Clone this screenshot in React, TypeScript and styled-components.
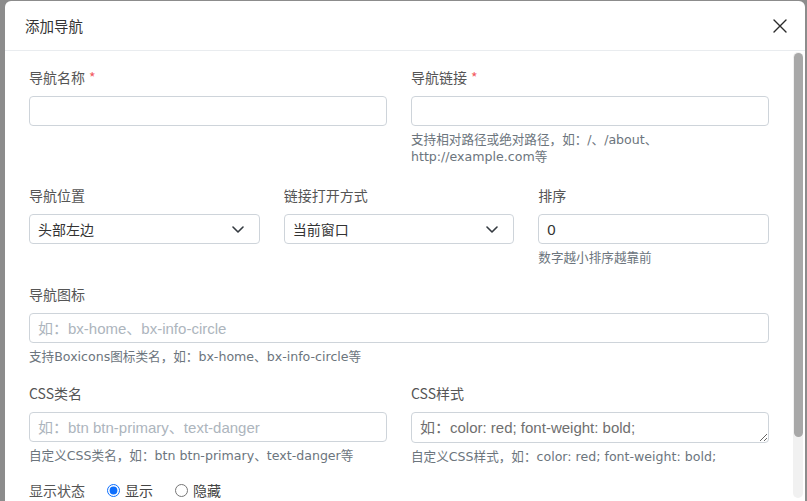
import React from 'react';
import styled, { createGlobalStyle } from 'styled-components';

const GlobalStyle = createGlobalStyle`
  html, body {
    margin: 0;
    padding: 0;
    background: #8c8c8c;
    overflow: hidden;
    font-family: "Noto Sans", "Noto Sans CJK SC", sans-serif;
  }
  * {
    box-sizing: border-box;
  }
`;

const Backdrop = styled.div`
  height: 501px;
  padding: 1px 2px 0 5px;
  display: flex;
`;

const Modal = styled.div`
  width: 800px;
  height: 500px;
  background: #fff;
  border-radius: 6px 6px 0 0;
  display: flex;
  flex-direction: column;
  overflow: hidden;
`;

const Header = styled.div`
  height: 50px;
  flex-shrink: 0;
  display: flex;
  align-items: center;
  justify-content: space-between;
  padding: 0 18px 0 20px;
  border-bottom: 1px solid #e9ecef;
`;

const Title = styled.h5`
  margin: 0;
  font-size: 14.5px;
  font-weight: 400;
  color: #333;
  font-family: "Noto Sans CJK SC", sans-serif;
`;

const CloseButton = styled.button`
  border: 0;
  background: none;
  padding: 0;
  display: flex;
  cursor: pointer;
`;

const BodyFrame = styled.div`
  flex: 1;
  min-height: 0;
  display: flex;
  padding: 1px 2px 3px 0;
`;

const Content = styled.div`
  flex: 1;
  overflow: hidden;
  padding: 15px 24px 0 24px;
`;

const ScrollTrack = styled.div`
  width: 10px;
  background: #f1f1f1;
  border-radius: 5px;
  display: flex;
  justify-content: center;
  padding-top: 1px;
`;

const ScrollThumb = styled.div<{ $size: number }>`
  width: 9px;
  height: ${(p) => p.$size}px;
  background: #a8a8a8;
  border-radius: 5px;
`;

const Row = styled.div<{ $cols: number; $extra?: number }>`
  display: grid;
  grid-template-columns: repeat(${(p) => p.$cols}, 1fr);
  column-gap: 24px;
  padding-bottom: ${(p) => p.$extra ?? 0}px;
`;

const Group = styled.div`
  margin-bottom: 18px;
`;

const Label = styled.label`
  display: block;
  font-family: "Noto Sans CJK SC", sans-serif;
  font-size: 14px;
  line-height: 21px;
  color: #555;
  margin-bottom: 8px;
`;

const Required = styled.span`
  color: #f25961;
  margin-left: 4px;
`;

const fieldBase = `
  width: 100%;
  height: 30px;
  border: 1px solid #ced4da;
  border-radius: 4px;
  padding: 0 8px;
  font-size: 15px;
  color: #333;
  background: #fff;
  outline: none;
  font-family: "Liberation Sans", "Noto Sans CJK SC", sans-serif;
  &::placeholder {
    color: #adb5bd;
  }
`;

const Input = styled.input`
  ${fieldBase}
`;

const TextArea = styled.textarea`
  ${fieldBase}
  display: block;
  height: 31px;
  padding: 4px 8px;
  line-height: 21px;
  resize: vertical;
  overflow: hidden;
  &::placeholder {
    color: #6f6f6f;
  }
`;

const SelectWrap = styled.div`
  position: relative;
`;

const Select = styled.select`
  ${fieldBase}
  appearance: none;
  font-size: 14px;
  font-family: "Noto Sans CJK SC", sans-serif;
`;

const Chevron = styled.svg`
  position: absolute;
  right: 16px;
  top: 12px;
  pointer-events: none;
`;

const Help = styled.div`
  margin-top: 5px;
  font-family: "DejaVu Sans", "Noto Sans CJK SC", sans-serif;
  font-size: 12.6px;
  line-height: 17px;
  color: #6c757d;
`;

const RadioRow = styled.div`
  display: flex;
  align-items: center;
  margin-top: -3px;
  font-family: "Noto Sans CJK SC", sans-serif;
  font-size: 14px;
  line-height: 21px;
  color: #555;
`;

const RadioLabel = styled.span`
  margin-right: 22px;
`;

const RadioOption = styled.label`
  display: flex;
  align-items: center;
  gap: 5px;
  margin-right: 22px;
  color: #444;

  input {
    margin: 0;
    width: 13px;
    height: 13px;
    accent-color: #0d6efd;
  }
`;

const DownArrow = () => (
  <Chevron width="12" height="7" viewBox="0 0 12 7" fill="none">
    <path d="M1 1l5 5 5-5" stroke="#343a40" strokeWidth="1.6" strokeLinecap="round" strokeLinejoin="round" />
  </Chevron>
);

export default function App() {
  return (
    <>
      <GlobalStyle />
      <Backdrop>
        <Modal>
          <Header>
            <Title>添加导航</Title>
            <CloseButton aria-label="关闭">
              <svg width="14" height="14" viewBox="0 0 14 14" fill="none">
                <path d="M1 1l12 12M13 1L1 13" stroke="#2b2b2b" strokeWidth="1.4" strokeLinecap="round" />
              </svg>
            </CloseButton>
          </Header>
          <BodyFrame>
            <Content>
              <Row $cols={2} $extra={2}>
                <Group>
                  <Label>
                    导航名称<Required>*</Required>
                  </Label>
                  <Input />
                </Group>
                <Group>
                  <Label>
                    导航链接<Required>*</Required>
                  </Label>
                  <Input />
                  <Help>支持相对路径或绝对路径，如：/、/about、http://example.com等</Help>
                </Group>
              </Row>
              <Row $cols={3}>
                <Group>
                  <Label>导航位置</Label>
                  <SelectWrap>
                    <Select defaultValue="left">
                      <option value="left">头部左边</option>
                    </Select>
                    <DownArrow />
                  </SelectWrap>
                </Group>
                <Group>
                  <Label>链接打开方式</Label>
                  <SelectWrap>
                    <Select defaultValue="self">
                      <option value="self">当前窗口</option>
                    </Select>
                    <DownArrow />
                  </SelectWrap>
                </Group>
                <Group>
                  <Label>排序</Label>
                  <Input type="number" defaultValue={0} />
                  <Help>数字越小排序越靠前</Help>
                </Group>
              </Row>
              <Row $cols={1}>
                <Group>
                  <Label>导航图标</Label>
                  <Input placeholder="如：bx-home、bx-info-circle" />
                  <Help>支持Boxicons图标类名，如：bx-home、bx-info-circle等</Help>
                </Group>
              </Row>
              <Row $cols={2}>
                <Group>
                  <Label>CSS类名</Label>
                  <Input placeholder="如：btn btn-primary、text-danger" />
                  <Help>自定义CSS类名，如：btn btn-primary、text-danger等</Help>
                </Group>
                <Group>
                  <Label>CSS样式</Label>
                  <TextArea rows={1} placeholder="如：color: red; font-weight: bold;" />
                  <Help>自定义CSS样式，如：color: red; font-weight: bold;</Help>
                </Group>
              </Row>
              <RadioRow>
                <RadioLabel>显示状态</RadioLabel>
                <RadioOption>
                  <input type="radio" name="status" defaultChecked />
                  显示
                </RadioOption>
                <RadioOption>
                  <input type="radio" name="status" />
                  隐藏
                </RadioOption>
              </RadioRow>
            </Content>
            <ScrollTrack>
              <ScrollThumb $size={384} />
            </ScrollTrack>
          </BodyFrame>
        </Modal>
      </Backdrop>
    </>
  );
}
